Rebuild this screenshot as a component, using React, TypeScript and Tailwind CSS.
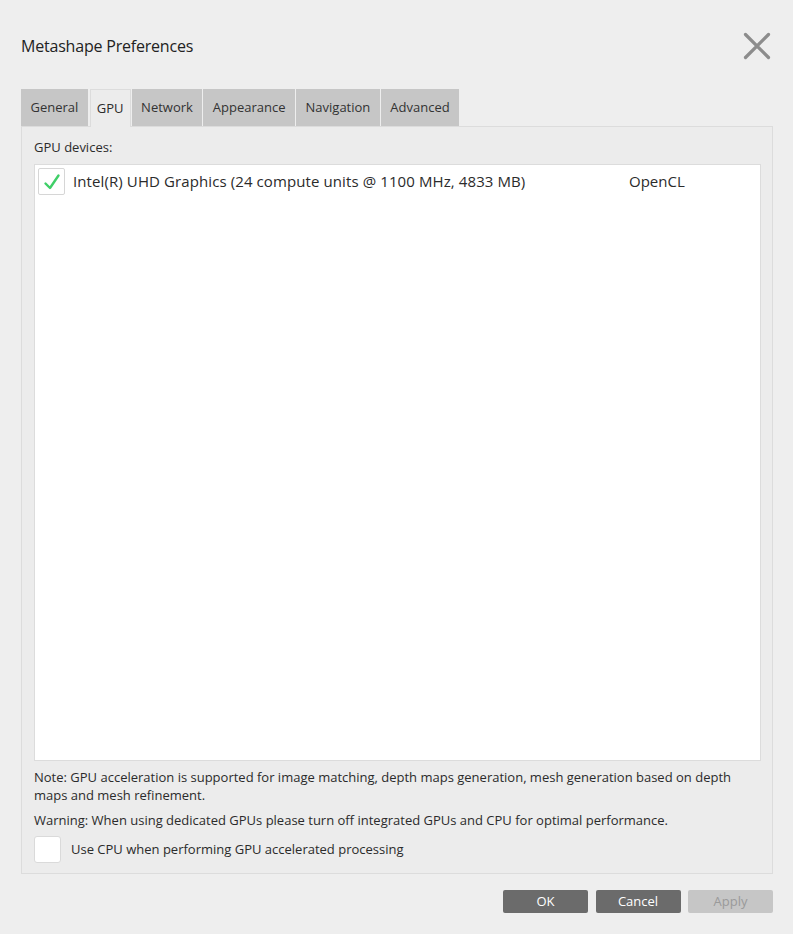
import React from "react";

const tabs = ["General", "GPU", "Network", "Appearance", "Navigation", "Advanced"];

function CloseIcon() {
  return (
    <svg width="28" height="28" viewBox="0 0 28 28" className="block">
      <path d="M2.5 2.5 L25.5 25.5 M25.5 2.5 L2.5 25.5" stroke="#8c8c8c" strokeWidth="3.2" strokeLinecap="round" />
    </svg>
  );
}

function Check() {
  return (
    <svg width="20" height="20" viewBox="0 0 20 20">
      <path d="M3.5 11.5 L8 16 L16.5 3.5" fill="none" stroke="#3fcf68" strokeWidth="2.4" strokeLinecap="round" strokeLinejoin="round" />
    </svg>
  );
}

export default function App() {
  return (
    <div className="w-[793px] h-[934px] bg-[#eeeeee] text-[#2b2b2b] font-['Open_Sans',sans-serif] flex flex-col">
      {/* Header */}
      <div className="flex items-center justify-between pl-[21px] pr-[22px] pt-[32px] h-[89px] pb-[29px]">
        <h1 className="text-[16px] text-[#222] tracking-[-0.2px]">Metashape Preferences</h1>
        <CloseIcon />
      </div>

      {/* Tabs */}
      <div className="flex ml-[21px] h-[37px] relative z-10">
        {tabs.map((t) => {
          const active = t === "GPU";
          return (
            <div
              key={t}
              className={
                active
                  ? "h-[38px] px-[6px] ml-[1px] mr-[1px] bg-[#ececec] border border-b-0 border-[#dcdcdc] text-[13px] flex items-center"
                  : "h-[37px] px-[9.5px] mr-[1px] bg-[#c6c6c6] text-[13px] flex items-center text-[#333]"
              }
            >
              {t}
            </div>
          );
        })}
      </div>

      {/* Panel */}
      <div className="mx-[21px] w-[752px] h-[748px] border border-[#dcdcdc] bg-[#ececec] flex flex-col px-[12px]">
        <div className="text-[13px] pt-[11px] h-[37px]">GPU devices:</div>
        <div className="w-[727px] h-[597px] bg-white border border-[#dcdcdc] pt-[3px] pl-[3px]">
          <div className="flex items-center h-[27px]">
            <div className="w-[27px] h-[27px] border border-[#d6d6d6] rounded-[2px] flex items-center justify-center">
              <Check />
            </div>
            <span className="ml-[8px] text-[15px] w-[556px] tracking-[0.1px]">
              Intel(R) UHD Graphics (24 compute units @ 1100 MHz, 4833 MB)
            </span>
            <span className="text-[15px]">OpenCL</span>
          </div>
        </div>
        <p className="mt-[7px] text-[13px] leading-[18px] w-[718px]">
          Note: GPU acceleration is supported for image matching, depth maps generation, mesh generation based on depth
          maps and mesh refinement.
        </p>
        <p className="mt-[7px] text-[13px] leading-[18px]">
          Warning: When using dedicated GPUs please turn off integrated GPUs and CPU for optimal performance.
        </p>
        <div className="flex items-center mt-[7px]">
          <div className="w-[27px] h-[27px] bg-white border border-[#dadada] rounded-[3px]" />
          <span className="ml-[10px] text-[13px]">Use CPU when performing GPU accelerated processing</span>
        </div>
      </div>

      {/* Buttons */}
      <div className="flex justify-end gap-[7.5px] pr-[20px] mt-[16px]">
        <button className="w-[85px] h-[23px] rounded-[2px] bg-[#6b6b6b] text-white text-[13px]">OK</button>
        <button className="w-[85px] h-[23px] rounded-[2px] bg-[#6b6b6b] text-white text-[13px]">Cancel</button>
        <button className="w-[85px] h-[23px] rounded-[2px] bg-[#c6c6c6] text-[#9a9a9a] text-[13px]">Apply</button>
      </div>
    </div>
  );
}
